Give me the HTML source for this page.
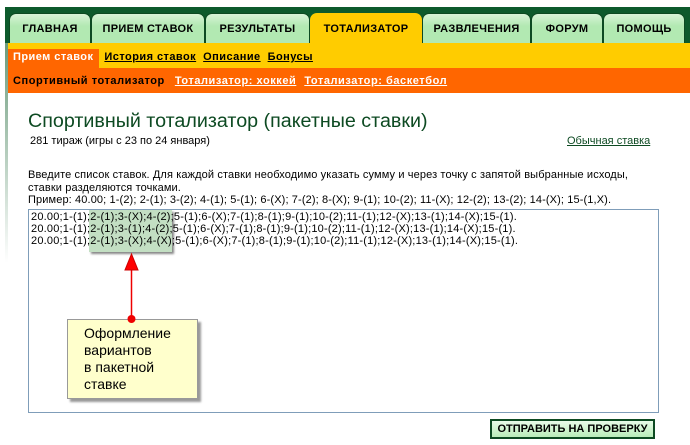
<!DOCTYPE html>
<html><head><meta charset="utf-8"><style>
*{margin:0;padding:0;box-sizing:border-box}
body{width:690px;height:445px;background:#fff;position:relative;overflow:hidden;font-family:"Liberation Sans","DejaVu Sans",sans-serif;font-size:11px;color:#000}
.abs{position:absolute}
.bar{left:5px;top:7px;width:685px;height:37px;background:#0d5a2c}
.tab{position:absolute;top:13px;height:31px;background:linear-gradient(#d8f5d8,#b2e9b2 40%);border:1px solid #0d4a22;border-bottom:none;border-radius:7px 7px 0 0;font-weight:bold;font-size:11px;text-align:center;line-height:30px;letter-spacing:0.3px}
.tab.act{background:#fc0;border-color:#fc0;height:32px}
.yel{left:8px;top:43px;width:682px;height:26px;background:#fc0}
.org{left:8px;top:68px;width:682px;height:25px;background:#f60}
.sub a{color:#000;font-weight:bold;text-decoration:underline;font-size:11px}
.leftb{left:5px;top:43px;width:3px;height:220px;background:linear-gradient(#6a9a7a,#fff)}
</style></head><body>
<div class="abs bar"></div>
<div class="tab" style="left:9px;width:82px">ГЛАВНАЯ</div>
<div class="tab" style="left:91px;width:114px">ПРИЕМ СТАВОК</div>
<div class="tab" style="left:205px;width:105px">РЕЗУЛЬТАТЫ</div>
<div class="tab act" style="left:310px;width:112px">ТОТАЛИЗАТОР</div>
<div class="tab" style="left:422px;width:109px">РАЗВЛЕЧЕНИЯ</div>
<div class="tab" style="left:531px;width:72px">ФОРУМ</div>
<div class="tab" style="left:603px;width:82px">ПОМОЩЬ</div>
<div class="abs yel"></div>
<div class="abs leftb"></div>
<div class="abs" style="left:8px;top:49px;width:91px;height:20px;background:#f60"></div>
<div class="abs sub" style="left:13px;top:50px;white-space:nowrap;line-height:14px;letter-spacing:0.45px">
<span style="color:#fff;font-weight:bold">Прием ставок</span><a style="margin-left:11px">История ставок</a><a style="margin-left:7px">Описание</a><a style="margin-left:7px">Бонусы</a></div>
<div class="abs org"></div>
<div class="abs" style="left:13px;top:74px;white-space:nowrap;font-weight:bold;line-height:14px;letter-spacing:0.55px">Спортивный тотализатор<a style="color:#fff;margin-left:10px;text-decoration:underline">Тотализатор: хоккей</a><a style="color:#fff;margin-left:8px;text-decoration:underline">Тотализатор: баскетбол</a></div>
<div class="abs" style="left:28px;top:110px;font-size:19.7px;color:#0d4a22;white-space:nowrap">Спортивный тотализатор (пакетные ставки)</div>
<div class="abs" style="left:30px;top:135px;white-space:nowrap">281 тираж (игры с 23 по 24 января)</div>
<div class="abs" style="left:567px;top:135px;color:#0d4a22;text-decoration:underline">Обычная ставка</div>
<div class="abs" style="left:28px;top:169px;line-height:12.5px;white-space:nowrap;letter-spacing:0.12px">Введите список ставок. Для каждой ставки необходимо указать сумму и через точку с запятой выбранные исходы,<br>ставки разделяются точками.<br>Пример: 40.00; 1-(2); 2-(1); 3-(2); 4-(1); 5-(1); 6-(X); 7-(2); 8-(X); 9-(1); 10-(2); 11-(X); 12-(2); 13-(2); 14-(X); 15-(1,X).</div>
<div class="abs" style="left:28px;top:209px;width:631px;height:204px;border:1px solid #7f9db9"></div>
<div class="abs" style="left:89px;top:210px;width:83px;height:42px;background:#c3dfc3;box-shadow:2px 2px 2px #888"></div>
<div class="abs" style="left:31px;top:211px;line-height:12px;white-space:nowrap;letter-spacing:0.2px">20.00;1-(1);2-(1);3-(X);4-(2);5-(1);6-(X);7-(1);8-(1);9-(1);10-(2);11-(1);12-(X);13-(1);14-(X);15-(1).<br>20.00;1-(1);2-(1);3-(1);4-(2);5-(1);6-(X);7-(1);8-(1);9-(1);10-(2);11-(1);12-(X);13-(1);14-(X);15-(1).<br>20.00;1-(1);2-(1);3-(X);4-(X);5-(1);6-(X);7-(1);8-(1);9-(1);10-(2);11-(1);12-(X);13-(1);14-(X);15-(1).</div>
<div class="abs" style="left:67px;top:319px;width:131px;height:80px;background:#ffc;border:1px solid #999;box-shadow:3px 3px 2px #999"></div>
<div class="abs" style="left:84px;top:325px;font-size:14px;line-height:17px">Оформление<br>вариантов<br>в пакетной<br>ставке</div>
<svg class="abs" style="left:120px;top:252px" width="24" height="72"><line x1="11.5" y1="15" x2="11.5" y2="67" stroke="#e00" stroke-width="1.5"/><polygon points="11.5,2 5,18 18,18" fill="#f00" stroke="#c00"/><circle cx="11.5" cy="67" r="4" fill="#e00"/></svg>
<div class="abs" style="left:490px;top:419px;width:165px;height:20px;border:2px solid #0d4a22;background:linear-gradient(#e8fbe8,#b8ecb8);font-weight:bold;font-size:11px;text-align:center;line-height:16px;color:#000">ОТПРАВИТЬ НА ПРОВЕРКУ</div>
</body></html>
